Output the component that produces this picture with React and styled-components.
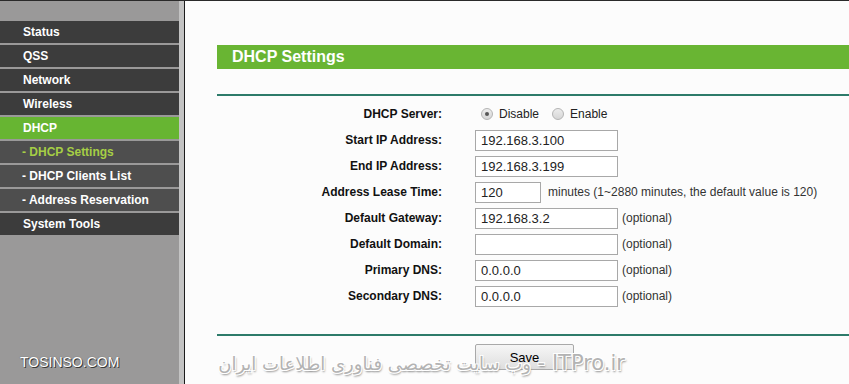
import React from "react";
import styled, { createGlobalStyle } from "styled-components";

const GlobalStyle = createGlobalStyle`
    html, body {
        margin: 0;
        padding: 0;
        background: #fcfcfc;
    }
    body {
        font-family: "Liberation Sans", Arial, sans-serif;
    }
`;

const menu = [
    { text: "Status" },
    { text: "QSS" },
    { text: "Network" },
    { text: "Wireless" },
    { text: "DHCP", active: true },
    { text: "- DHCP Settings", sub: true, current: true },
    { text: "- DHCP Clients List", sub: true },
    { text: "- Address Reservation", sub: true },
    { text: "System Tools" },
];

const fields = [
    { label: "Start IP Address:", value: "192.168.3.100" },
    { label: "End IP Address:", value: "192.168.3.199" },
    { label: "Address Lease Time:", value: "120", short: true, note: "minutes (1~2880 minutes, the default value is 120)" },
    { label: "Default Gateway:", value: "192.168.3.2", note: "(optional)" },
    { label: "Default Domain:", value: "", note: "(optional)" },
    { label: "Primary DNS:", value: "0.0.0.0", note: "(optional)" },
    { label: "Secondary DNS:", value: "0.0.0.0", note: "(optional)" },
];

const App = () => {
    return (
        <Page>
            <GlobalStyle />
            <Sidebar>
                {menu.map((m) => (
                    <MenuItem key={m.text} $active={m.active} $sub={m.sub} $current={m.current}>
                        {m.text}
                    </MenuItem>
                ))}
                <SideMark>TOSINSO.COM</SideMark>
            </Sidebar>
            <Strip />
            <Main>
                <TitleBar>DHCP Settings</TitleBar>
                <Rule $top={25} />
                <Form>
                    <Label>DHCP Server:</Label>
                    <Field>
                        <Radio $checked />
                        <RadioText>Disable</RadioText>
                        <Radio />
                        <RadioText>Enable</RadioText>
                    </Field>
                    {fields.map((f) => (
                        <React.Fragment key={f.label}>
                            <Label>{f.label}</Label>
                            <Field $wide={f.short}>
                                <TextBox $short={f.short} defaultValue={f.value} />
                                {f.note && <Note>{f.note}</Note>}
                            </Field>
                        </React.Fragment>
                    ))}
                </Form>
                <Rule $top={25} />
                <Actions>
                    <SaveButton>Save</SaveButton>
                </Actions>
                <Watermark>
                    ITPro.ir - <Farsi>وب سایت تخصصی فناوری اطلاعات ایران</Farsi>
                </Watermark>
            </Main>
        </Page>
    );
};

export default App;

const Page = styled.div`
    display: flex;
    height: 384px;
    overflow: hidden;
    border-top: 1px solid #2a2a2a;
    box-sizing: border-box;
    position: relative;
`;

const Sidebar = styled.div`
    width: 179px;
    flex-shrink: 0;
    background: #9a9999;
    padding-top: 20px;
    display: flex;
    flex-direction: column;
    gap: 2px;
    position: relative;
`;

const MenuItem = styled.div`
    height: 22px;
    line-height: 22px;
    padding-left: ${(p) => (p.$sub ? 22 : 23)}px;
    font-size: 12px;
    font-weight: bold;
    color: ${(p) => (p.$current ? "#a6cf45" : "#ffffff")};
    background: ${(p) => (p.$active ? "#67b532" : p.$sub ? "#4e4e4e" : "#3c3c3c")};
    white-space: nowrap;
`;

const SideMark = styled.div`
    position: absolute;
    left: 20px;
    top: 353px;
    font-size: 14px;
    color: #ffffff;
    text-shadow: 1px 1px 0 #3a3a3a, 0 0 1px #555;
`;

const Strip = styled.div`
    width: 5px;
    flex-shrink: 0;
    background: #c3c3c3;
    border-right: 1px solid #1c1c1c;
`;

const Main = styled.div`
    flex: 1;
    min-width: 0;
    background: #fcfcfc;
    padding: 44px 0 0 32px;
    position: relative;
`;

const TitleBar = styled.div`
    height: 24px;
    line-height: 24px;
    background: #69b533;
    color: #ffffff;
    font-size: 16px;
    font-weight: bold;
    padding-left: 15px;
    width: 900px;
`;

const Rule = styled.div`
    margin-top: ${(p) => p.$top}px;
    height: 2px;
    width: 900px;
    background: #2d7b6a;
`;

const Form = styled.div`
    display: grid;
    grid-template-columns: 225px 1fr;
    grid-auto-rows: 26px;
    column-gap: 33px;
    align-items: center;
    padding-top: 5px;
`;

const Label = styled.div`
    text-align: right;
    font-size: 12px;
    font-weight: bold;
    color: #111;
    white-space: nowrap;
`;

const Field = styled.div`
    display: flex;
    align-items: center;
    gap: ${(p) => (p.$wide ? 7 : 4)}px;
    white-space: nowrap;
`;

const Radio = styled.span`
    width: 12px;
    height: 12px;
    box-sizing: border-box;
    border-radius: 50%;
    border: 1px solid #b4b4b4;
    background: linear-gradient(#ececec, #d6d6d6);
    margin-left: 6px;
    position: relative;
    &::after {
        content: "";
        display: ${(p) => (p.$checked ? "block" : "none")};
        position: absolute;
        left: 3px;
        top: 3px;
        width: 4px;
        height: 4px;
        border-radius: 50%;
        background: #555;
    }
`;

const RadioText = styled.span`
    font-size: 12px;
    color: #222;
    margin-left: 2px;
    margin-right: 3px;
`;

const TextBox = styled.input`
    box-sizing: border-box;
    width: ${(p) => (p.$short ? 66 : 143)}px;
    height: 21px;
    border: 1px solid #a8a8a8;
    background: #ffffff;
    padding: 0 5px;
    margin: 0;
    font-family: "Liberation Sans", Arial, sans-serif;
    font-size: 13px;
    color: #222;
    outline: none;
`;

const Note = styled.span`
    font-size: 12px;
    color: #333;
`;

const Actions = styled.div`
    padding: 8px 0 0 258px;
`;

const SaveButton = styled.button`
    width: 99px;
    height: 26px;
    border: 1px solid #a9a9a9;
    border-radius: 2px;
    background: linear-gradient(#f6f6f6, #dedede);
    font-family: "Liberation Sans", Arial, sans-serif;
    font-size: 13px;
    color: #000;
    padding: 0;
`;

const Watermark = styled.div`
    position: absolute;
    top: 350px;
    right: 224px;
    direction: rtl;
    white-space: nowrap;
    font-family: "DejaVu Sans", sans-serif;
    font-size: 21px;
    color: #b3b3b3;
    text-shadow: -1px -1px 0 #fff, 1px -1px 0 #fff, -1px 1px 0 #fff, 1px 1px 0 #fff, 1px 2px 2px #888;
`;

const Farsi = styled.span`
    font-size: 18px;
`;
